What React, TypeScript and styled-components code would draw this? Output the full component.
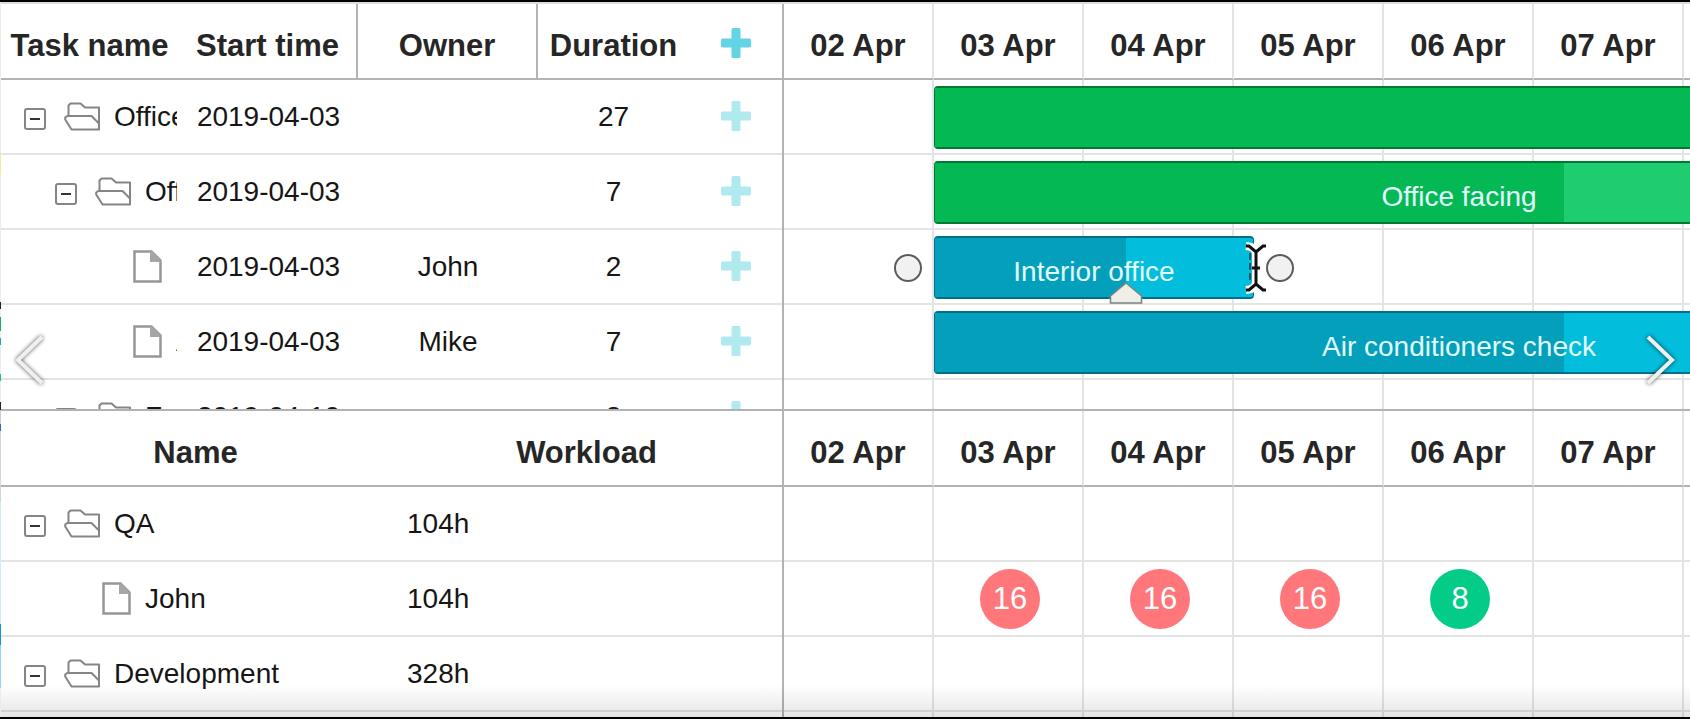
import React from "react";
import styled, { createGlobalStyle, css } from "styled-components";

const DAY_WIDTH = 150;
const FIRST_DAY = 2;
const DAYS = ["02 Apr", "03 Apr", "04 Apr", "05 Apr", "06 Apr", "07 Apr", "08 Apr"];

const line = "#b3b3b3";
const softLine = "#e4e4e4";

type Tone = "green" | "blue";

const tones: Record<Tone, { done: string; rest: string; edge: string }> = {
  green: { done: "#04b953", rest: "#1fcc70", edge: "#007a33" },
  blue: { done: "#039fbb", rest: "#02bddb", edge: "#00708a" },
};

interface Task {
  name: string;
  level: number;
  folder: boolean;
  start: string;
  owner: string;
  duration: number;
  bar?: { day: number; days: number; progress: number; tone: Tone; label: string; active?: boolean };
}

const tasks: Task[] = [
  {
    name: "Office itinerancy", level: 0, folder: true, start: "2019-04-03", owner: "", duration: 27,
    bar: { day: 3, days: 27, progress: 40, tone: "green", label: "" },
  },
  {
    name: "Office facing", level: 1, folder: true, start: "2019-04-03", owner: "", duration: 7,
    bar: { day: 3, days: 7, progress: 60, tone: "green", label: "Office facing" },
  },
  {
    name: "Interior office", level: 2, folder: false, start: "2019-04-03", owner: "John", duration: 2,
    bar: { day: 3, days: 2.13, progress: 60, tone: "blue", label: "Interior office", active: true },
  },
  {
    name: "Air conditioners check", level: 2, folder: false, start: "2019-04-03", owner: "Mike", duration: 7,
    bar: { day: 3, days: 7, progress: 60, tone: "blue", label: "Air conditioners check" },
  },
  { name: "Furniture installation", level: 1, folder: true, start: "2019-04-10", owner: "", duration: 8 },
];

interface Resource {
  name: string;
  level: number;
  folder: boolean;
  workload: string;
  hours: Record<string, number>;
}

const resources: Resource[] = [
  { name: "QA", level: 0, folder: true, workload: "104h", hours: {} },
  {
    name: "John", level: 1, folder: false, workload: "104h",
    hours: { "03 Apr": 16, "04 Apr": 16, "05 Apr": 16, "06 Apr": 8 },
  },
  { name: "Development", level: 0, folder: true, workload: "328h", hours: {} },
  { name: "", level: 0, folder: false, workload: "", hours: {} },
];

const GlobalStyle = createGlobalStyle`
  *, *::before, *::after { box-sizing: border-box; }
  body {
    margin: 0;
    background: #fff;
    color: #161616;
    font-family: "Liberation Sans", Arial, sans-serif;
    font-size: 28px;
    line-height: 32px;
  }
  button {
    margin: 0;
    padding: 0;
    border: 0;
    background: none;
    color: inherit;
    font: inherit;
    cursor: pointer;
  }
`;

const Shell = styled.main`
  position: relative;
  display: flex;
  flex-direction: column;
  height: 100vh;
  overflow: hidden;
  border-top: 2px solid #000;
  border-bottom: 2px solid #000;
  background: #fff;
`;

const EdgeStrip = styled.div`
  position: absolute;
  top: 0;
  bottom: 0;
  left: 0;
  width: 1px;
  background: linear-gradient(
    #ececec 21%, #f3e9a0 21% 24%, #ececec 24% 42%, #222 42% 43%, #ececec 43% 44%,
    #12b45c 44% 46%, #ececec 46% 47%, #14a9c8 47% 48%, #ececec 48% 52%, #21c08a 52% 53%,
    #ececec 53% 56%, #222 56% 57%, #ccc 57% 59%, #2a6fc0 59% 60%, #d5d5d5 60% 70%,
    #c8eef6 70% 87%, #0a9be0 87% 90%, #8fd9f0 90% 96%, #ececec 96%
  );
`;

const Panel = styled.section<{ $fill?: boolean }>`
  display: grid;
  grid-template-columns: 784px minmax(0, 1fr);
  overflow: hidden;
  ${(p) =>
    p.$fill
      ? css`
          flex: 1;
          min-height: 0;
        `
      : css`
          flex: none;
          border-top: 2px solid #ddd;
          border-bottom: 2px solid ${line};
        `}
`;

const Pane = styled.div<{ $divider?: boolean; $clip?: boolean }>`
  overflow: hidden;
  height: ${(p) => (p.$clip ? "405px" : "auto")};
  border-right: ${(p) => (p.$divider ? `2px solid ${line}` : "0")};
`;

const Table = styled.table`
  width: 100%;
  table-layout: fixed;
  border-collapse: separate;
  border-spacing: 0;
`;

const DayTable = styled(Table)`
  width: ${DAYS.length * DAY_WIDTH}px;
`;

const Col = styled.col<{ $w?: number }>`
  width: ${(p) => (p.$w ? `${p.$w}px` : "auto")};
`;

const headText = css`
  height: 76px;
  padding: 9px 0 0;
  border-bottom: 2px solid ${line};
  color: #262626;
  font-size: 31px;
  font-weight: 700;
  line-height: 36px;
  text-align: center;
  white-space: nowrap;
`;

const Head = styled.th<{ $rule?: "strong" | "soft" }>`
  ${headText}
  border-right: ${(p) =>
    p.$rule === "strong" ? `2px solid ${line}` : p.$rule === "soft" ? `2px solid ${softLine}` : "0"};
`;

const Cell = styled.td<{ $align?: "left" | "center"; $rule?: boolean }>`
  height: 75px;
  padding: 0 0 0 ${(p) => (p.$align === "left" ? "16px" : p.$rule ? "4px" : "0")};
  overflow: hidden;
  border-bottom: 2px solid ${softLine};
  border-right: ${(p) => (p.$rule ? `2px solid ${softLine}` : "0")};
  text-align: ${(p) => p.$align ?? "center"};
  white-space: nowrap;
`;

const Tree = styled.div<{ $level: number }>`
  display: flex;
  align-items: center;
  margin-right: 2px;
  padding-left: ${(p) => 24 + p.$level * 31}px;
  overflow: hidden;
`;

const ToggleSlot = styled.span`
  display: flex;
  flex: none;
  width: 22px;
  margin-right: 18px;
  padding-top: 4px;
`;

const Toggle = styled.button`
  display: flex;
  align-items: center;
  justify-content: center;
  width: 22px;
  height: 22px;
  border: 2px solid #858585;
  border-radius: 3px;

  &::before {
    content: "";
    width: 10px;
    height: 2px;
    background: #333;
  }
`;

const IconSlot = styled.span`
  display: flex;
  flex: none;
  justify-content: flex-end;
  width: 36px;
  margin-right: 14px;
`;

const AddButton = styled.button<{ $strong?: boolean }>`
  display: inline-flex;
  vertical-align: top;
  color: ${(p) => (p.$strong ? "#62d4e4" : "#b0e9ef")};
`;

const DayHeader = styled.div`
  display: grid;
  grid-template-columns: repeat(${DAYS.length}, ${DAY_WIDTH}px);
`;

const DayName = styled.div`
  ${headText}
  display: flex;
  align-items: center;
  justify-content: center;
  border-right: 2px solid ${softLine};
`;

const Track = styled.div`
  position: relative;
  display: grid;
  grid-template-columns: repeat(${DAYS.length}, ${DAY_WIDTH}px);
  height: 75px;
`;

const TrackCell = styled.div`
  border-right: 2px solid ${softLine};
  border-bottom: 2px solid ${softLine};
`;

const Bar = styled.div<{ $tone: Tone }>`
  position: absolute;
  top: 6px;
  height: 63px;
  border: 2px solid ${(p) => tones[p.$tone].edge};
  border-left-width: 1px;
  border-right-width: 1px;
  border-radius: 4px;
  background: ${(p) => tones[p.$tone].rest};
`;

const Progress = styled.div<{ $tone: Tone }>`
  height: 100%;
  background: ${(p) => tones[p.$tone].done};
`;

const BarLabel = styled.span`
  position: absolute;
  inset: 0;
  display: flex;
  align-items: center;
  justify-content: center;
  padding-top: 8px;
  color: #e2fbff;
  white-space: nowrap;
`;

const LinkDot = styled.button<{ $side: "left" | "right" }>`
  position: absolute;
  top: 16px;
  ${(p) => p.$side}: -41px;
  width: 28px;
  height: 28px;
  border: 2px solid #5c5c5c;
  border-radius: 50%;
  background: #f1f1f1;
`;

const ProgressGrip = styled.svg`
  position: absolute;
  bottom: -7px;
  margin-left: -17px;
`;

const ResizeCursor = styled.svg`
  position: absolute;
  top: 3px;
  right: -18px;
`;

const Load = styled.span<{ $over: boolean }>`
  display: inline-flex;
  align-items: center;
  justify-content: center;
  width: 60px;
  height: 60px;
  border-radius: 50%;
  background: ${(p) => (p.$over ? "#ff777b" : "#03cc88")};
  color: #fff;
  font-size: 31px;
  vertical-align: middle;
`;

const BottomShade = styled.div`
  position: absolute;
  right: 0;
  bottom: 0;
  left: 0;
  height: 32px;
  background: linear-gradient(rgba(0, 0, 0, 0), rgba(0, 0, 0, 0.1));
  pointer-events: none;
`;

const SlideButton = styled.button<{ $side: "left" | "right" }>`
  position: absolute;
  top: 50%;
  ${(p) => p.$side}: 12px;
  display: flex;
  transform: translateY(-50%);
  filter: drop-shadow(0 0 2px rgba(0, 0, 0, 0.7));
`;

const Plus = () => (
  <svg width="30" height="30" viewBox="0 0 30 30" aria-hidden="true">
    <path
      d="M12 0h6q1.500 0 1.500 1.500v9h9q1.500 0 1.500 1.500v6q0 1.500-1.500 1.500h-9v9q0 1.500-1.500 1.500h-6q-1.500 0-1.500-1.500v-9h-9q-1.500 0-1.500-1.500v-6q0-1.500 1.500-1.500h9v-9q0-1.500 1.500-1.500z"
      fill="currentColor"
    />
  </svg>
);

const Folder = () => (
  <svg width="36" height="29" viewBox="0 0 36 29" fill="none" stroke="#858585" strokeWidth="2" strokeLinejoin="round" aria-hidden="true">
    <path d="M4.500 14V3.500l2-2H16.500l4.500 4H35V27.500H7.500L1.200 17.500V15.500l2-1.500H27.500L35 21.500" />
  </svg>
);

const FileIcon = () => (
  <svg width="29" height="33" viewBox="0 0 29 33" aria-hidden="true">
    <path d="M1.500 1.500H18.500L27.500 10.500V31.500H1.500Z" fill="#fff" stroke="#979797" strokeWidth="2.500" />
    <path d="M17 1.500H19.500L28 10.500V12H17Z" fill="#a6a6a6" />
  </svg>
);

const Chevron = ({ flip }: { flip?: boolean }) => (
  <svg width="34" height="54" viewBox="0 0 34 54" fill="none" stroke="#f0f0f0" strokeWidth="4" aria-hidden="true">
    <path d={flip ? "M4 4L28 27L4 50" : "M30 4L6 27L30 50"} />
  </svg>
);

const NameCell = ({ name, level, folder }: { name: string; level: number; folder: boolean }) => (
  <Tree $level={level}>
    <ToggleSlot>{folder && <Toggle type="button" aria-expanded="true" aria-label={`Collapse ${name}`} />}</ToggleSlot>
    <IconSlot>{folder ? <Folder /> : <FileIcon />}</IconSlot>
    {name}
  </Tree>
);

const TaskBar = ({ bar }: { bar: NonNullable<Task["bar"]> }) => (
  <Bar
    $tone={bar.tone}
    style={{ left: (bar.day - FIRST_DAY) * DAY_WIDTH, width: Math.round(bar.days * DAY_WIDTH) }}
  >
    <Progress $tone={bar.tone} style={{ width: `${bar.progress}%` }} />
    <BarLabel>{bar.label}</BarLabel>
    {bar.active && (
      <>
        <LinkDot $side="left" type="button" aria-label="Link from start" />
        <LinkDot $side="right" type="button" aria-label="Link from end" />
        <ProgressGrip width="34" height="22" viewBox="0 0 34 22" style={{ left: `${bar.progress}%` }}>
          <path d="M17 1L32.500 14V21H1.500V14Z" fill="#efeee9" stroke="#7d8383" strokeWidth="1.500" />
        </ProgressGrip>
        <ResizeCursor width="30" height="54" viewBox="0 0 30 54" fill="none">
          <path d="M5 5Q15 6 15 13Q15 6 25 5M15 12V42M5 49Q15 48 15 41Q15 48 25 49M11 27H19" stroke="#fff" strokeWidth="8" />
          <path d="M9 12V42" stroke="#04506a" strokeWidth="2" strokeDasharray="7 3" />
          <path d="M5 5H8L15 11L22 5H25M15 10V44M5 49H8L15 43L22 49H25M11 27H19" stroke="#111" strokeWidth="3" />
        </ResizeCursor>
      </>
    )}
  </Bar>
);

export default function App() {
  return (
    <>
      <GlobalStyle />
      <Shell>
        <Panel aria-label="Tasks">
          <Pane $divider $clip>
            <Table>
              <colgroup>
                <Col $w={179} />
                <Col $w={179} />
                <Col $w={180} />
                <Col $w={151} />
                <Col />
              </colgroup>
              <thead>
                <tr>
                  <Head>Task name</Head>
                  <Head $rule="strong">Start time</Head>
                  <Head $rule="strong">Owner</Head>
                  <Head>Duration</Head>
                  <Head>
                    <AddButton $strong type="button" aria-label="Add task">
                      <Plus />
                    </AddButton>
                  </Head>
                </tr>
              </thead>
              <tbody>
                {tasks.map((task) => (
                  <tr key={task.name}>
                    <Cell>
                      <NameCell name={task.name} level={task.level} folder={task.folder} />
                    </Cell>
                    <Cell>{task.start}</Cell>
                    <Cell>{task.owner}</Cell>
                    <Cell>{task.duration}</Cell>
                    <Cell>
                      <AddButton type="button" aria-label={`Add to ${task.name}`}>
                        <Plus />
                      </AddButton>
                    </Cell>
                  </tr>
                ))}
              </tbody>
            </Table>
          </Pane>
          <Pane $clip>
            <DayHeader>
              {DAYS.map((day) => (
                <DayName key={day}>{day}</DayName>
              ))}
            </DayHeader>
            {tasks.map((task) => (
              <Track key={task.name}>
                {DAYS.map((day) => (
                  <TrackCell key={day} />
                ))}
                {task.bar && <TaskBar bar={task.bar} />}
              </Track>
            ))}
          </Pane>
        </Panel>

        <Panel $fill aria-label="Resources">
          <Pane $divider>
            <Table>
              <thead>
                <tr>
                  <Head>Name</Head>
                  <Head>Workload</Head>
                </tr>
              </thead>
              <tbody>
                {resources.map((res) => (
                  <tr key={res.name}>
                    <Cell>{res.name && <NameCell name={res.name} level={res.level} folder={res.folder} />}</Cell>
                    <Cell $align="left">{res.workload}</Cell>
                  </tr>
                ))}
              </tbody>
            </Table>
          </Pane>
          <Pane>
            <DayTable>
              <thead>
                <tr>
                  {DAYS.map((day) => (
                    <Head key={day} $rule="soft">
                      {day}
                    </Head>
                  ))}
                </tr>
              </thead>
              <tbody>
                {resources.map((res) => (
                  <tr key={res.name}>
                    {DAYS.map((day) => (
                      <Cell key={day} $rule>
                        {res.hours[day] && <Load $over={res.hours[day] > 8}>{res.hours[day]}</Load>}
                      </Cell>
                    ))}
                  </tr>
                ))}
              </tbody>
            </DayTable>
          </Pane>
        </Panel>

        <BottomShade />
        <EdgeStrip />
        <SlideButton $side="left" type="button" aria-label="Previous">
          <Chevron />
        </SlideButton>
        <SlideButton $side="right" type="button" aria-label="Next">
          <Chevron flip />
        </SlideButton>
      </Shell>
    </>
  );
}
